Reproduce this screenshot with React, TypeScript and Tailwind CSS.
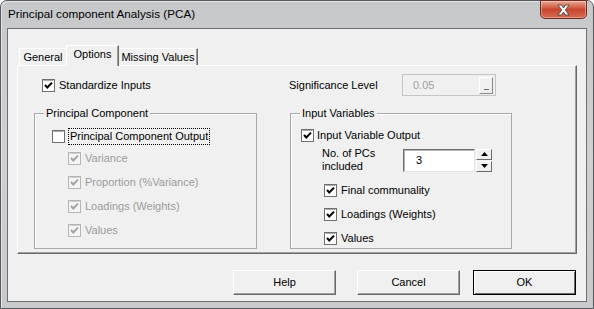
import React from "react";

const ui = "font-['Liberation_Sans',Arial,sans-serif] text-[11px] leading-[13px]";

function Box({ checked, disabled }: { checked?: boolean; disabled?: boolean }) {
  return (
    <svg width="13" height="13" viewBox="0 0 13 13" className="shrink-0">
      <rect x="0.5" y="0.5" width="12" height="12" fill={disabled ? "#f4f4f4" : "#ffffff"} stroke={disabled ? "#b5b5b5" : "#6f6f6f"} />
      <path d="M1.5 1.5 H11.5" stroke={disabled ? "#d0d0d0" : "#a8a8a8"} />
      {checked && (
        <path d="M3 6 L5.3 8.5 L10 3.6" fill="none" stroke={disabled ? "#a3a3a3" : "#000000"} strokeWidth="2" />
      )}
    </svg>
  );
}

function Arrow({ up }: { up?: boolean }) {
  return (
    <svg width="7" height="4" viewBox="0 0 7 4">
      <path d={up ? "M0 4 L3.5 0 L7 4 Z" : "M0 0 L3.5 4 L7 0 Z"} fill="#000" />
    </svg>
  );
}

function Btn({ label, def }: { label: string; def?: boolean }) {
  return (
    <button
      className={
        "w-[103px] h-[25px] bg-[#f0f0f0] flex items-center justify-center text-black " +
        ui +
        (def
          ? " border border-black shadow-[inset_1px_1px_0_#ffffff,inset_-1px_-1px_0_#696969]"
          : " border-t border-l border-t-white border-l-white border-r border-b border-r-[#696969] border-b-[#696969] shadow-[inset_-1px_-1px_0_#a0a0a0]")
      }
    >
      {label}
    </button>
  );
}

export default function App() {
  return (
    <div className="w-[594px] h-[309px] bg-white">
      <div className="w-full h-full flex flex-col rounded-t-[7px] border border-[#555a60] bg-gradient-to-b from-[#c6c8ca] via-[#cfd0d1] to-[#c8c9ca] shadow-[inset_1px_1px_0_#e4e4e4]">
        {/* title bar */}
        <div className="h-[27px] flex items-start justify-between">
          <span className="pl-[7px] pt-[6px] font-['Liberation_Sans',Arial,sans-serif] text-[11.7px] leading-[14px] text-black">
            Principal component Analysis (PCA)
          </span>
          <div className="mr-[6px] w-[47px] h-[19px] -mt-px rounded-b-[5px] border border-[#6e2a1f] bg-gradient-to-b from-[#e9a893] via-[#c9452d] to-[#d66a4f] flex items-center justify-center shadow-[inset_0_0_0_1px_rgba(255,255,255,0.35)]">
            <svg width="15" height="12" viewBox="0 0 15 12">
              <path d="M2 1 H5.5 L7.5 4 L9.5 1 H13 L9.3 6 L13 11 H9.5 L7.5 8 L5.5 11 H2 L5.7 6 Z" fill="#ffffff" stroke="#4a4a4a" strokeWidth="0.9" />
            </svg>
          </div>
        </div>

        {/* client area */}
        <div className={"flex-1 mx-[6px] mb-[6px] border border-[#6d6f72] bg-[#f0f0f0] flex flex-col text-black " + ui}>
          {/* tabs */}
          <div className="mt-[16px] ml-[11px] h-[20px] flex items-end relative z-10">
            <div className="w-[47px] h-[17px] border-t border-l border-t-white border-l-white bg-[#f0f0f0] flex items-center justify-center">
              General
            </div>
            <div className="w-[53px] h-[21px] -mb-px pb-[3px] border-t border-l border-t-white border-l-white border-r border-r-[#696969] bg-[#f0f0f0] flex items-center justify-center shadow-[inset_-1px_0_0_#a0a0a0]">
              Options
            </div>
            <div className="w-[79px] h-[17px] border-t border-t-white border-r border-r-[#696969] bg-[#f0f0f0] flex items-center justify-center shadow-[inset_-1px_0_0_#a0a0a0]">
              Missing Values
            </div>
          </div>

          {/* tab panel */}
          <div className="mx-[9px] h-[189px] border border-t-white border-l-white border-r-[#696969] border-b-[#696969] shadow-[inset_-1px_-1px_0_#a0a0a0] flex flex-col">
            <div className="mt-[8px] h-[22px] flex items-center">
              <div className="ml-[24px] w-[247px] flex items-center gap-[4px]">
                <Box checked />
                <span>Standardize Inputs</span>
              </div>
              <span className="w-[113px]">Significance Level</span>
              <div className="w-[94px] h-[22px] border border-[#c5c5c5] bg-[#f0f0f0] flex items-center justify-between pl-[10px] pr-[2px]">
                <span className="text-[#a0a0a0]">0.05</span>
                <div className="w-[14px] h-[17px] border border-t-white border-l-white border-r-[#8a8a8a] border-b-[#8a8a8a] bg-[#f0f0f0] flex items-end justify-center pb-[3px]">
                  <span className="block w-[5px] h-px bg-[#6a6a6a]" />
                </div>
              </div>
            </div>

            <div className="mt-[17px] ml-[16px] flex gap-[33px]">
              {/* Principal Component group */}
              <div className="relative w-[223px] h-[136px] border border-[#a8a8a8] shadow-[inset_1px_1px_0_#ffffff] pt-[14px] pl-[17px]">
                <span className="absolute -top-[7px] left-[9px] px-[2px] bg-[#f0f0f0]">Principal Component</span>
                <div className="flex items-center gap-[3px]">
                  <Box />
                  <span className="border border-dotted border-black px-[1px] py-[1px] leading-[13px]">Principal Component Output</span>
                </div>
                <div className="mt-[7px] ml-[16px] flex flex-col gap-[11px] text-[#9b9b9b]">
                  {["Variance", "Proportion (%Variance)", "Loadings (Weights)", "Values"].map((t) => (
                    <div key={t} className="flex items-center gap-[4px] h-[13px]">
                      <Box checked disabled />
                      <span>{t}</span>
                    </div>
                  ))}
                </div>
              </div>

              {/* Input Variables group */}
              <div className="relative w-[222px] h-[136px] border border-[#a8a8a8] shadow-[inset_1px_1px_0_#ffffff] pt-[14px] pl-[10px]">
                <span className="absolute -top-[7px] left-[9px] px-[2px] bg-[#f0f0f0]">Input Variables</span>
                <div className="flex items-center gap-[3px] h-[14px]">
                  <Box checked />
                  <span>Input Variable Output</span>
                </div>
                <div className="mt-[5px] ml-[21px] flex items-center">
                  <div className="w-[81px] leading-[13px]">
                    No. of PCs
                    <br />
                    included
                  </div>
                  <div className="w-[72px] h-[23px] bg-white border border-t-[#6d6d6d] border-l-[#6d6d6d] border-r-[#e3e3e3] border-b-[#e3e3e3] shadow-[inset_1px_1px_0_#b5b5b5] flex items-center pl-[12px]">
                    3
                  </div>
                  <div className="ml-px w-[16px] h-[23px] flex flex-col">
                    <div className="h-[11px] bg-[#f0f0f0] border border-t-white border-l-white border-r-[#696969] border-b-[#696969] flex items-center justify-center">
                      <Arrow up />
                    </div>
                    <div className="mt-px h-[11px] bg-[#f0f0f0] border border-t-white border-l-white border-r-[#696969] border-b-[#696969] flex items-center justify-center">
                      <Arrow />
                    </div>
                  </div>
                </div>
                <div className="mt-[11px] ml-[23px] flex flex-col gap-[11px]">
                  {["Final communality", "Loadings (Weights)", "Values"].map((t) => (
                    <div key={t} className="flex items-center gap-[4px] h-[13px]">
                      <Box checked />
                      <span>{t}</span>
                    </div>
                  ))}
                </div>
              </div>
            </div>
          </div>

          {/* buttons */}
          <div className="mt-[16px] mr-[10px] flex justify-end">
            <Btn label="Help" />
            <div className="w-[21px]" />
            <Btn label="Cancel" />
            <div className="w-[13px]" />
            <Btn label="OK" def />
          </div>
        </div>
      </div>
    </div>
  );
}
